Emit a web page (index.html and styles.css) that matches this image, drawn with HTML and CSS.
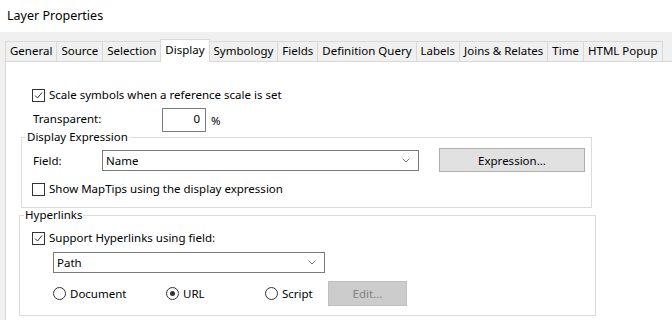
FILE: index.html
```html
<!DOCTYPE html>
<html lang="en">
<head>
  <meta charset="UTF-8" />
  <title>Layer Properties</title>
  <link rel="stylesheet" href="styles.css">
</head>
<body>
  <div class="titlebar">Layer Properties</div>

  <div class="tabs">
    <div class="tab">General</div>
    <div class="tab">Source</div>
    <div class="tab">Selection</div>
    <div class="tab active">Display</div>
    <div class="tab">Symbology</div>
    <div class="tab">Fields</div>
    <div class="tab">Definition Query</div>
    <div class="tab">Labels</div>
    <div class="tab">Joins &amp; Relates</div>
    <div class="tab">Time</div>
    <div class="tab">HTML Popup</div>
  </div>

  <div class="panel">
    <label class="check-row scale-row">
      <span class="checkbox checked">
        <svg width="11" height="11" viewBox="0 0 11 11"><path d="M2 5.5 L4.5 8 L9 2.5" fill="none" stroke="#333" stroke-width="1"/></svg>
      </span>
      Scale symbols when a reference scale is set
    </label>

    <div class="transparent-row">
      <span class="transparent-label">Transparent:</span>
      <span class="number-box">0</span>
      <span class="unit">%</span>
    </div>

    <fieldset class="group display-group">
      <legend>Display Expression</legend>
      <div class="field-row">
        <span class="field-label">Field:</span>
        <div class="select field-select">
          <span>Name</span>
          <svg width="8" height="5" viewBox="0 0 8 5"><path d="M0.5 0.5 L4 4 L7.5 0.5" fill="none" stroke="#777" stroke-width="1"/></svg>
        </div>
        <button class="btn expr-btn">Expression...</button>
      </div>
      <label class="check-row maptips-row">
        <span class="checkbox"></span>
        Show MapTips using the display expression
      </label>
    </fieldset>

    <fieldset class="group hyper-group">
      <legend>Hyperlinks</legend>
      <label class="check-row support-row">
        <span class="checkbox checked">
          <svg width="11" height="11" viewBox="0 0 11 11"><path d="M2 5.5 L4.5 8 L9 2.5" fill="none" stroke="#333" stroke-width="1"/></svg>
        </span>
        Support Hyperlinks using field:
      </label>
      <div class="select path-select">
        <span>Path</span>
        <svg width="8" height="5" viewBox="0 0 8 5"><path d="M0.5 0.5 L4 4 L7.5 0.5" fill="none" stroke="#777" stroke-width="1"/></svg>
      </div>
      <div class="radio-row">
        <label class="radio-item doc"><span class="radio"></span>Document</label>
        <label class="radio-item url"><span class="radio on"></span>URL</label>
        <label class="radio-item script"><span class="radio"></span>Script</label>
        <button class="btn edit-btn" disabled>Edit...</button>
      </div>
    </fieldset>
  </div>
</body>
</html>
```

FILE: styles.css
```css
body {
  margin: 0;
  background: #f0f0f0;
  font-family: 'Noto Sans', sans-serif;
  font-size: 11.5px;
  color: #000;
  height: 320px;
  overflow: hidden;
}
.titlebar {
  background: #fff;
  height: 32px;
  line-height: 32px;
  padding-left: 7px;
  font-size: 12.5px;
}
.tabs {
  display: flex;
  padding: 9px 0 0 5px;
  height: 20px;
}
.tab {
  height: 19px;
  line-height: 18px;
  padding: 0 4px;
  border: 1px solid #d9d9d9;
  border-bottom: none;
  margin-right: -1px;
  background: #f0f0f0;
  white-space: nowrap;
}
.tab.active {
  background: #fff;
  margin-top: -2px;
  height: 22px;
  line-height: 20px;
  position: relative;
  z-index: 1;
}
.panel {
  box-sizing: border-box;
  background: #fff;
  margin-left: 5px;
  border-left: 1px solid #d9d9d9;
  border-top: 1px solid #d9d9d9;
  padding: 25px 0 0 15px;
  height: 259px;
}
.check-row {
  display: flex;
  align-items: center;
  gap: 4px;
  line-height: 16px;
}
.checkbox {
  width: 11px;
  height: 11px;
  border: 1px solid #333;
  background: #fff;
  display: inline-flex;
}
.scale-row {
  margin-left: 11px;
}
.transparent-row {
  display: flex;
  align-items: center;
  margin: 5px 0 0 12px;
  height: 24px;
}
.transparent-label {
  width: 129px;
  margin-top: -3px;
}
.number-box {
  width: 37px;
  height: 22px;
  border: 1px solid #7a7a7a;
  text-align: right;
  padding-right: 5px;
  line-height: 20px;
}
.unit {
  margin-left: 5px;
}
.group {
  margin: -2px 0 0;
  border: 1px solid #dcdcdc;
  padding: 0 0 10px 4px;
}
.group legend {
  padding: 0 1px;
  line-height: 14px;
}
.display-group {
  width: 565px;
}
.hyper-group {
  margin: 0 0 0 -2px;
  width: 571px;
  padding-bottom: 9px;
}
.field-row {
  display: flex;
  align-items: center;
  margin: 4px 0 0 7px;
  height: 24px;
}
.field-label {
  width: 69px;
}
.select {
  display: flex;
  align-items: center;
  justify-content: space-between;
  border: 1px solid #7a7a7a;
  height: 19px;
  padding: 0 8px 0 3px;
  box-sizing: content-box;
}
.field-select {
  width: 304px;
}
.btn {
  font-family: inherit;
  font-size: 11.5px;
  background: #e1e1e1;
  border: 1px solid #adadad;
  color: #000;
  padding: 0;
  margin: 0;
}
.expr-btn {
  width: 146px;
  height: 24px;
  margin-left: 20px;
}
.maptips-row {
  margin: 9px 0 0 6px;
}
.support-row {
  margin: 8px 0 0 8px;
}
.path-select {
  width: 259px;
  margin: 6px 0 0 29px;
}
.radio-row {
  display: flex;
  align-items: center;
  margin: 8px 0 0 29px;
  height: 25px;
}
.radio-item {
  display: flex;
  align-items: center;
  gap: 4px;
  flex: none;
}
.radio-item.doc { width: 113px; }
.radio-item.url { width: 99px; }
.radio-item.script { width: 63px; }
.radio {
  width: 11px;
  height: 11px;
  border: 1px solid #333;
  border-radius: 50%;
  display: inline-flex;
  align-items: center;
  justify-content: center;
}
.radio.on::after {
  content: "";
  width: 5px;
  height: 5px;
  border-radius: 50%;
  background: #333;
}
.edit-btn {
  flex: none;
  width: 79px;
  height: 25px;
  background: #cccccc;
  border-color: #bfbfbf;
  color: #838383;
}
```
